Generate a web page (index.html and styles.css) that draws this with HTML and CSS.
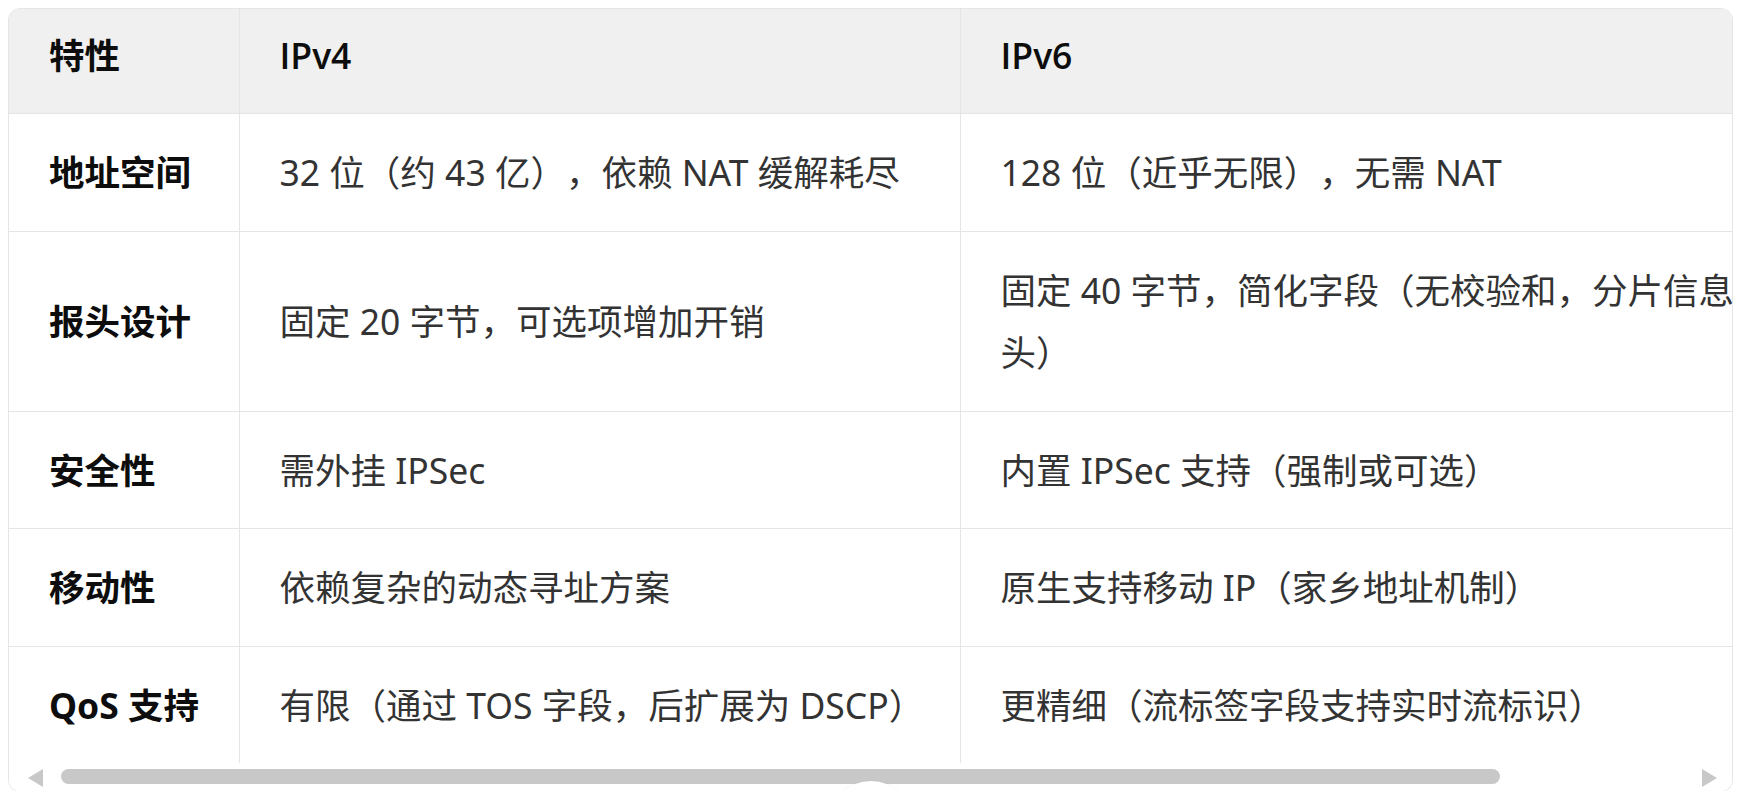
FILE: index.html
```html
<!DOCTYPE html>
<html lang="zh-CN">
<head>
<meta charset="utf-8">
<title>IPv4 与 IPv6 对比</title>
<link rel="stylesheet" href="styles.css">
</head>
<body>
<div class="table-wrap">
  <div class="table-scroll">
    <table class="compare">
      <colgroup>
        <col class="c-feature">
        <col class="c-v4">
        <col class="c-v6">
      </colgroup>
      <thead>
        <tr><th>特性</th><th>IPv4</th><th>IPv6</th></tr>
      </thead>
      <tbody>
        <tr><td class="feat">地址空间</td><td class="v4">32 位（约 43 亿），依赖 NAT 缓解耗尽</td><td>128 位（近乎无限），无需 NAT</td></tr>
        <tr><td class="feat">报头设计</td><td class="v4">固定 20 字节，可选项增加开销</td><td>固定 40 字节，简化字段（无校验和，分片信息移至扩展报头）</td></tr>
        <tr><td class="feat">安全性</td><td class="v4">需外挂 IPSec</td><td>内置 IPSec 支持（强制或可选）</td></tr>
        <tr><td class="feat">移动性</td><td class="v4">依赖复杂的动态寻址方案</td><td>原生支持移动 IP（家乡地址机制）</td></tr>
        <tr><td class="feat">QoS 支持</td><td class="v4">有限（通过 TOS 字段，后扩展为 DSCP）</td><td>更精细（流标签字段支持实时流标识）</td></tr>
      </tbody>
    </table>
  </div>
  <div class="hscroll" aria-hidden="true">
    <span class="arrow arrow-left"></span>
    <span class="thumb"></span>
    <span class="hscroll-rest"></span>
    <span class="arrow arrow-right"></span>
  </div>
</div>
<div class="fab"></div>
</body>
</html>
```
FILE: styles.css
```css
html, body {
  margin: 0;
  padding: 0;
  background: #ffffff;
}
body {
  padding: 8px;
  font-family: "Noto Sans", "Noto Sans CJK SC", sans-serif;
  overflow: hidden;
}
.table-wrap {
  border: 1px solid #e5e5e5;
  border-radius: 12px;
  overflow: hidden;
}
.table-scroll {
  overflow: hidden;
}
.compare {
  border-collapse: collapse;
  table-layout: fixed;
  width: 1980px;
  font-size: 35.5px;
  line-height: 62.5px;
  color: #333333;
  text-spacing-trim: space-all;
}
.c-feature { width: 230px; }
.c-v4 { width: 721px; }
.compare th {
  background: #f0f0f0;
  color: #0d0d0d;
  font-family: "Open Sans", "Noto Sans CJK SC", sans-serif;
  font-weight: 600;
  text-align: left;
  padding: 15px 40px 26.5px;
  border-bottom: 1px solid #e5e5e5;
  white-space: nowrap;
}
.compare th:first-child {
  font-weight: 700;
}
.compare td {
  padding: 27px 40px;
  border-top: 1px solid #e5e5e5;
  vertical-align: middle;
}
.compare td.feat,
.compare td.v4 {
  white-space: nowrap;
  overflow: hidden;
}
.compare th + th,
.compare td + td {
  border-left: 1px solid #e5e5e5;
}
.compare tbody tr:first-child td { border-top: none; }
.compare td.feat {
  font-weight: 700;
  color: #0d0d0d;
  padding-right: 10px;
}
.hscroll {
  display: flex;
  align-items: center;
  height: 28px;
  padding: 0 15px 0 19px;
  background: #ffffff;
}
.arrow {
  width: 0;
  height: 0;
  border-top: 9px solid transparent;
  border-bottom: 9px solid transparent;
  margin-top: 2px;
}
.arrow-left {
  border-right: 15px solid #c8c8c8;
}
.arrow-right {
  border-left: 15px solid #c8c8c8;
}
.thumb {
  width: 1439px;
  height: 15px;
  margin-left: 18px;
  margin-top: -2px;
  border-radius: 8px;
  background: #c8c8c8;
}
.hscroll-rest {
  flex: 1;
}
.fab {
  position: fixed;
  left: 50%;
  top: 781px;
  width: 86px;
  height: 86px;
  margin-left: -43px;
  border-radius: 50%;
  background: #ffffff;
  box-shadow: 0 0 2px rgba(0,0,0,0.08);
}
```
